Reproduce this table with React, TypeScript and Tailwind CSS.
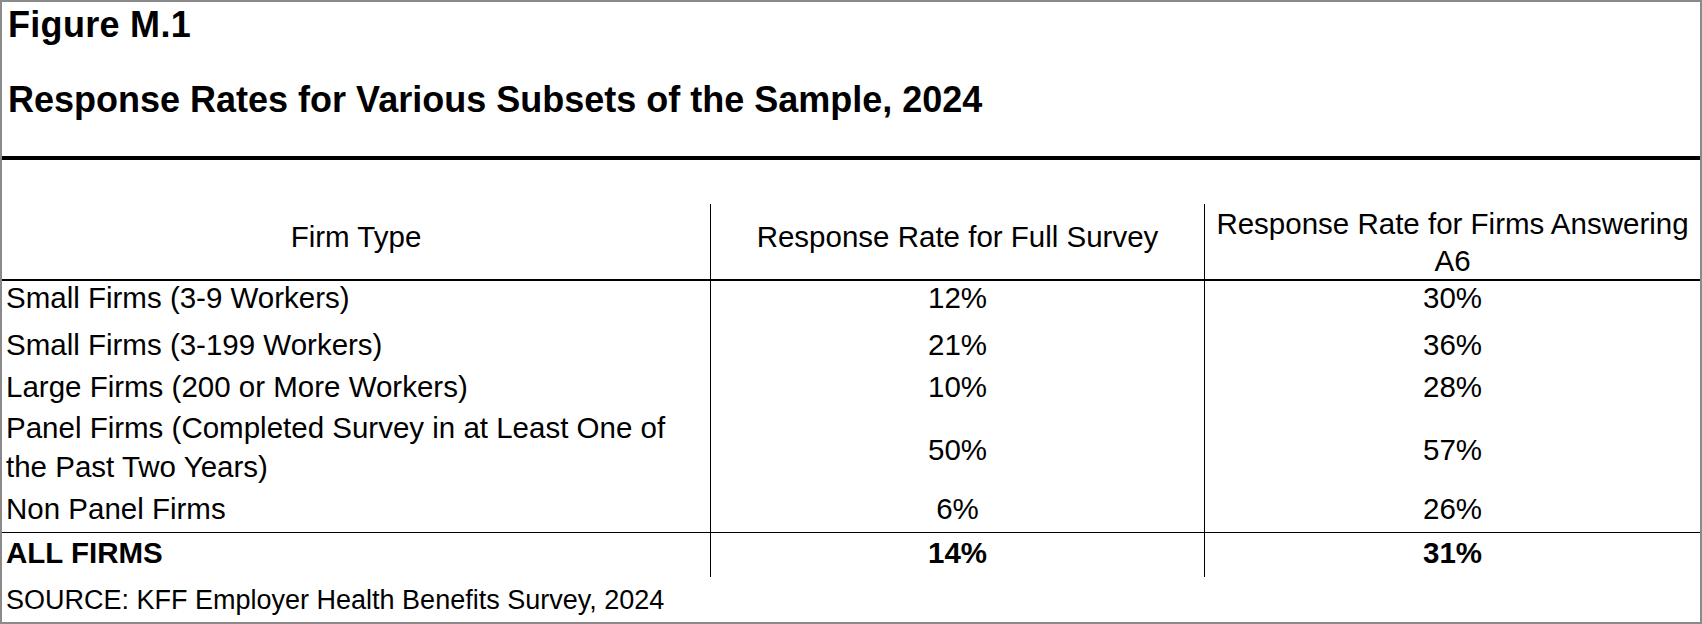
const ROWS = [
  { label: ['Small Firms (3-9 Workers)'], full: '12%', a6: '30%', h: 'h-[47px]' },
  { label: ['Small Firms (3-199 Workers)'], full: '21%', a6: '36%', h: 'h-[42px]' },
  { label: ['Large Firms (200 or More Workers)'], full: '10%', a6: '28%', h: 'h-[38px]' },
  {
    label: ['Panel Firms (Completed Survey in at Least One of', 'the Past Two Years)'],
    full: '50%',
    a6: '57%',
    h: 'h-[84px]',
  },
  { label: ['Non Panel Firms'], full: '6%', a6: '26%', h: 'h-[40px]' },
]

export default function App() {
  return (
    <div className="w-[1702px] h-[624px] box-border border-2 border-[#8a8a8a] bg-white text-black font-['Liberation_Sans',Arial,sans-serif] overflow-hidden">
      {/* title block */}
      <div className="h-[154px] pl-[6px] pt-[3px] font-bold text-[36px] leading-[40px] whitespace-nowrap">
        <div className="tracking-[0.3px]">Figure M.1</div>
        <div className="mt-[35px]">Response Rates for Various Subsets of the Sample, 2024</div>
      </div>
      <div className="h-[4px] bg-black" />
      <div className="h-[44px]" />

      <div className="text-[29.5px] whitespace-nowrap">
        {/* header */}
        <div className="grid grid-cols-[708px_494px_496px] h-[75px]">
          <div className="pt-[14px] leading-[37px] text-center">Firm Type</div>
          <div className="border-l border-black pt-[14px] leading-[37px] text-center">
            Response Rate for Full Survey
          </div>
          <div className="border-l border-black pt-[1px] leading-[37px] text-center">
            Response Rate for Firms Answering
            <br />
            A6
          </div>
        </div>
        <div className="h-[2px] bg-black" />

        {ROWS.map(r => (
          <div key={r.label[0]} className={`grid grid-cols-[708px_494px_496px] ${r.h}`}>
            <div className={`pl-[4px] ${r.label.length > 1 ? 'leading-[39px]' : 'leading-[34px]'}`}>
              {r.label.map(l => (
                <div key={l}>{l}</div>
              ))}
            </div>
            <div
              className={`border-l border-black leading-[34px] text-center ${
                r.label.length > 1 ? 'flex items-center justify-center' : ''
              }`}
            >
              {r.full}
            </div>
            <div
              className={`border-l border-black leading-[34px] text-center ${
                r.label.length > 1 ? 'flex items-center justify-center' : ''
              }`}
            >
              {r.a6}
            </div>
          </div>
        ))}

        <div className="h-[1px] bg-black" />
        <div className="grid grid-cols-[708px_494px_496px] h-[44px] font-bold leading-[34px]">
          <div className="pl-[4px] pt-[3px]">ALL FIRMS</div>
          <div className="border-l border-black pt-[3px] text-center">14%</div>
          <div className="border-l border-black pt-[3px] text-center">31%</div>
        </div>

        <div className="pl-[4px] mt-[6px] leading-[34px] text-[27px]">
          SOURCE: KFF Employer Health Benefits Survey, 2024
        </div>
      </div>
    </div>
  )
}
